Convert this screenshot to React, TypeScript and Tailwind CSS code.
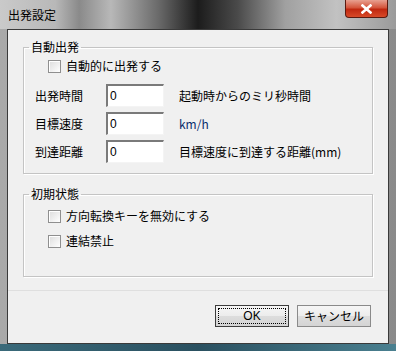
import React from 'react'

const font = { fontFamily: '"MS UI Gothic", "Noto Sans CJK JP", "Liberation Sans", sans-serif' }

const Check = ({ label }: { label: string }) => (
  <div className="flex items-center h-[14px]">
    <span className="w-[13px] h-[13px] border border-[#8f8f8f] bg-[linear-gradient(135deg,#dcdcdc,#ffffff)] shadow-[inset_1px_1px_0_#ffffff]" />
    <span className="ml-[5px] text-[12px] leading-none text-black">{label}</span>
  </div>
)

const Field = ({ label, hint, hintClass }: { label: string; hint: string; hintClass?: string }) => (
  <div className="flex items-center h-[23px]">
    <span className="w-[71px] text-[12px] leading-none text-black">{label}</span>
    <div className="w-[58px] h-[23px] bg-white border-t-2 border-l-2 border-[#7a7a7a] border-r border-b border-r-[#f4f4f4] border-b-[#f4f4f4] flex items-center pl-[2px]">
      <span className="text-[12px] leading-none text-black" style={{ fontFamily: '"Liberation Sans", sans-serif' }}>0</span>
    </div>
    <span className={'ml-[15px] text-[12px] leading-none ' + (hintClass ?? 'text-black')}>{hint}</span>
  </div>
)

export default function App() {
  return (
    <div className="w-[396px] h-[351px] flex flex-col overflow-hidden bg-[linear-gradient(90deg,#a9a9a9_0%,#9c9c9c_50%,#8a8a8a_100%)]" style={font}>
      <div className="h-[29px] flex items-start justify-between bg-[linear-gradient(90deg,#cacaca_0%,#b8b8b8_14%,#8a8a8a_20%,#b8b8b8_28%,#6a6a6a_40%,#1c1c1c_50%,#4a4a4a_60%,#a0a0a0_72%,#c2c2c2_85%,#9a9a9a_100%)]">
        <span className="ml-[8px] mt-[9px] text-[12px] leading-none text-black">出発設定</span>
        <div className="mr-[8px] w-[43px] h-[18px] rounded-b-[4px] border border-[#5a1a10] border-t-0 bg-[linear-gradient(180deg,#e8a090_0%,#d4553c_45%,#c02810_55%,#d84a28_100%)] flex items-center justify-center">
          <svg width="11" height="10" viewBox="0 0 11 10">
            <path d="M1.5 1.5 L9.5 8.5 M9.5 1.5 L1.5 8.5" stroke="#ffffff" strokeWidth="2.6" strokeLinecap="square" />
          </svg>
        </div>
      </div>
      <div className="mx-[7px] flex-1 border border-[#3a3a3a] bg-[#f0f0f0] flex flex-col">
        <div className="px-[15px] pt-[11px] flex flex-col gap-[14px]">
          <fieldset className="border border-[#c4c4c4] shadow-[inset_1px_1px_0_#ffffff,1px_1px_0_#ffffff] h-[133px] w-[350px] pt-[8px]">
            <legend className="ml-[5px] px-[2px] text-[12px] leading-none text-black">自動出発</legend>
            <div className="pl-[24px] mt-[-2px]">
              <Check label="自動的に出発する" />
            </div>
            <div className="pl-[11px] mt-[11px] flex flex-col gap-[5px]">
              <Field label="出発時間" hint="起動時からのミリ秒時間" />
              <Field label="目標速度" hint="km/h" hintClass="text-[#0b2d6b]" />
              <Field label="到達距離" hint="目標速度に到達する距離(mm)" />
            </div>
          </fieldset>
          <fieldset className="border border-[#c4c4c4] shadow-[inset_1px_1px_0_#ffffff,1px_1px_0_#ffffff] h-[89px] w-[350px] pt-[9px]">
            <legend className="ml-[5px] px-[2px] text-[12px] leading-none text-black">初期状態</legend>
            <div className="pl-[24px] flex flex-col gap-[11px]">
              <Check label="方向転換キーを無効にする" />
              <Check label="連結禁止" />
            </div>
          </fieldset>
        </div>
        <div className="mt-[13px] border-t border-[#dfdfdf] flex-1 bg-[#f0f0f0] flex justify-end items-start pt-[14px] pr-[17px] gap-[8px]">
          <button className="w-[74px] h-[22px] border border-[#3c3c3c] bg-[linear-gradient(180deg,#f6f6f6_0%,#ececec_50%,#dddddd_51%,#d4d4d4_100%)] p-[2px]">
            <span className="w-full h-full border border-dotted border-black flex items-center justify-center text-[12px] leading-none text-black" style={{ fontFamily: '"Liberation Sans", sans-serif' }}>OK</span>
          </button>
          <button className="w-[74px] h-[22px] border border-[#8a8a8a] bg-[linear-gradient(180deg,#f6f6f6_0%,#ececec_50%,#dddddd_51%,#d4d4d4_100%)] flex items-center justify-center text-[12px] leading-none text-black">
            キャンセル
          </button>
        </div>
      </div>
      <div className="h-[7px] bg-[linear-gradient(90deg,#3a6a7a,#2a5060_50%,#4a8090)]" />
    </div>
  )
}
